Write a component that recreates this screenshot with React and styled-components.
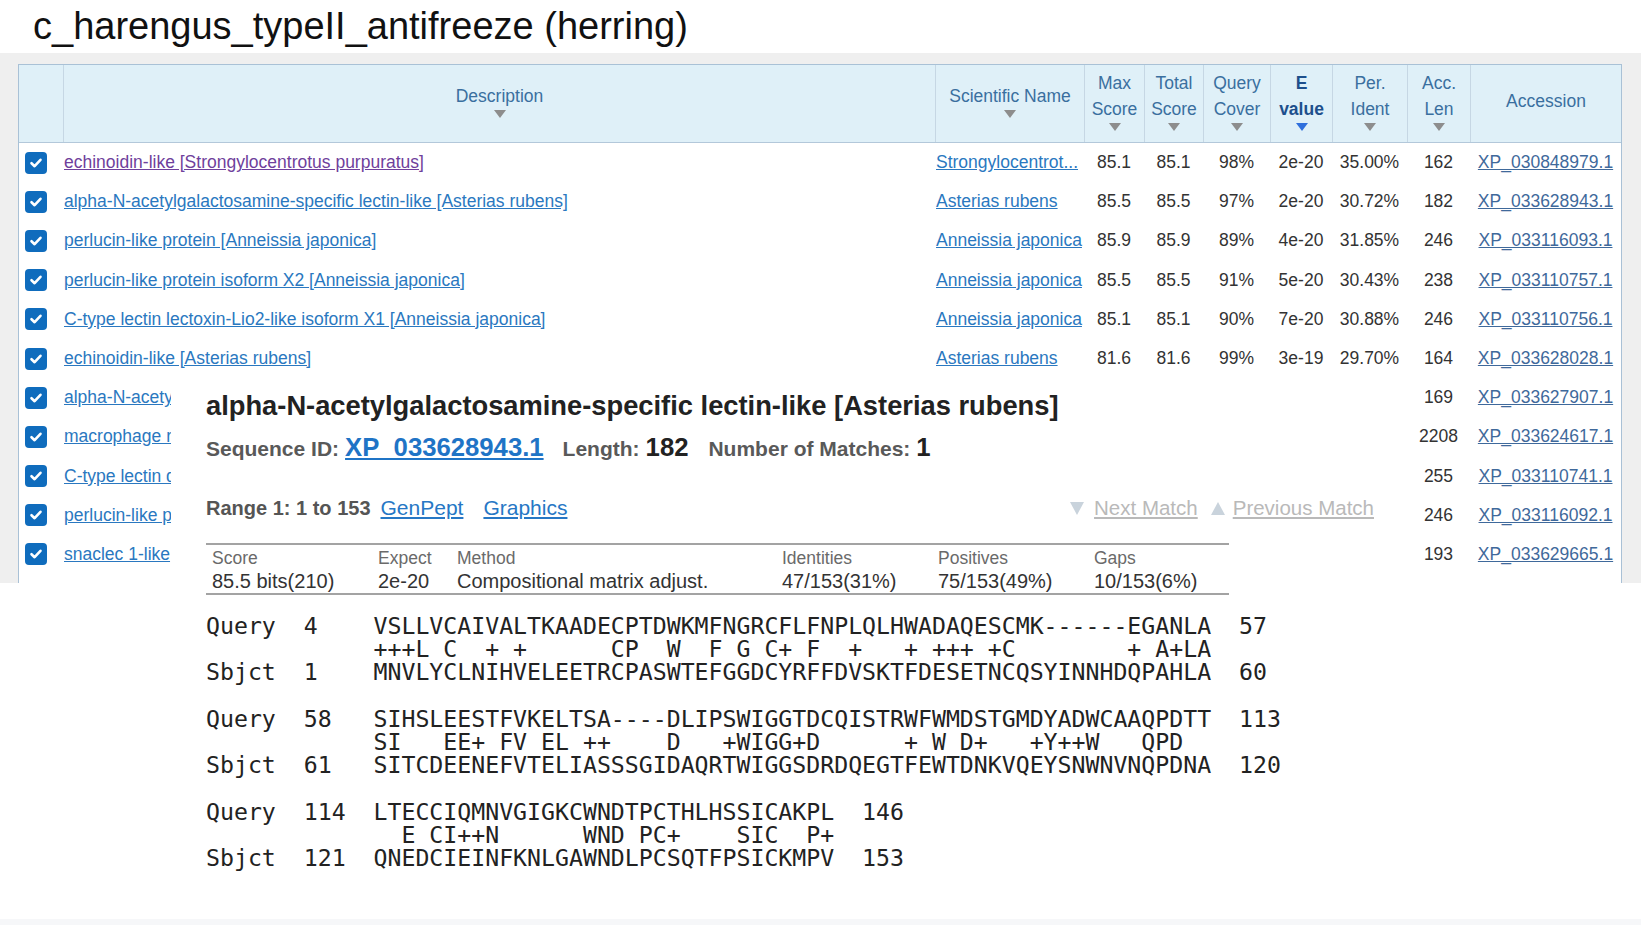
import styled, { createGlobalStyle } from "styled-components";

const GlobalStyle = createGlobalStyle`
  html, body {
    margin: 0;
    padding: 0;
    background: #fff;
  }
  body {
    width: 1641px;
    height: 925px;
    overflow: hidden;
    font-family: "Liberation Sans", Arial, sans-serif;
  }
`;

const COLS = "44px 872px 149px 60px 59px 67px 62px 75px 63px 151px";

const hits = [
  { desc: "echinoidin-like [Strongylocentrotus purpuratus]", visited: true, sci: "Strongylocentrot...", max: "85.1", total: "85.1", cover: "98%", e: "2e-20", ident: "35.00%", len: "162", acc: "XP_030848979.1" },
  { desc: "alpha-N-acetylgalactosamine-specific lectin-like [Asterias rubens]", sci: "Asterias rubens", max: "85.5", total: "85.5", cover: "97%", e: "2e-20", ident: "30.72%", len: "182", acc: "XP_033628943.1" },
  { desc: "perlucin-like protein [Anneissia japonica]", sci: "Anneissia japonica", max: "85.9", total: "85.9", cover: "89%", e: "4e-20", ident: "31.85%", len: "246", acc: "XP_033116093.1" },
  { desc: "perlucin-like protein isoform X2 [Anneissia japonica]", sci: "Anneissia japonica", max: "85.5", total: "85.5", cover: "91%", e: "5e-20", ident: "30.43%", len: "238", acc: "XP_033110757.1" },
  { desc: "C-type lectin lectoxin-Lio2-like isoform X1 [Anneissia japonica]", sci: "Anneissia japonica", max: "85.1", total: "85.1", cover: "90%", e: "7e-20", ident: "30.88%", len: "246", acc: "XP_033110756.1" },
  { desc: "echinoidin-like [Asterias rubens]", sci: "Asterias rubens", max: "81.6", total: "81.6", cover: "99%", e: "3e-19", ident: "29.70%", len: "164", acc: "XP_033628028.1" },
  { desc: "alpha-N-acetylgal", len: "169", acc: "XP_033627907.1" },
  { desc: "macrophage receptor", len: "2208", acc: "XP_033624617.1" },
  { desc: "C-type lectin domain", len: "255", acc: "XP_033110741.1" },
  { desc: "perlucin-like protein", len: "246", acc: "XP_033116092.1" },
  { desc: "snaclec 1-like", len: "193", acc: "XP_033629665.1" },
  { desc: "", len: "", acc: "" },
];

const alignment = `Query  4    VSLLVCAIVALTKAADECPTDWKMFNGRCFLFNPLQLHWADAQESCMK------EGANLA  57
            +++L C  + +      CP  W  F G C+ F  +   + +++ +C        + A+LA
Sbjct  1    MNVLYCLNIHVELEETRCPASWTEFGGDCYRFFDVSKTFDESETNCQSYINNHDQPAHLA  60

Query  58   SIHSLEESTFVKELTSA----DLIPSWIGGTDCQISTRWFWMDSTGMDYADWCAAQPDTT  113
            SI   EE+ FV EL ++    D   +WIGG+D      + W D+   +Y++W   QPD
Sbjct  61   SITCDEENEFVTELIASSSGIDAQRTWIGGSDRDQEGTFEWTDNKVQEYSNWNVNQPDNA  120

Query  114  LTECCIQMNVGIGKCWNDTPCTHLHSSICAKPL  146
              E CI++N      WND PC+    SIC  P+
Sbjct  121  QNEDCIEINFKNLGAWNDLPCSQTFPSICKMPV  153`;

export default function App() {
  return (
    <Page>
      <GlobalStyle />
      <Title>c_harengus_typeII_antifreeze (herring)</Title>

      <Shot>
        <Table>
          <Head>
            <HeadCell $first />
            <HeadCell>Description<SortArrow /></HeadCell>
            <HeadCell>Scientific Name<SortArrow /></HeadCell>
            <HeadCell><span>Max</span><span>Score</span><SortArrow /></HeadCell>
            <HeadCell><span>Total</span><span>Score</span><SortArrow /></HeadCell>
            <HeadCell><span>Query</span><span>Cover</span><SortArrow /></HeadCell>
            <HeadCell $active><span>E</span><span>value</span><SortArrow $active /></HeadCell>
            <HeadCell><span>Per.</span><span>Ident</span><SortArrow /></HeadCell>
            <HeadCell><span>Acc.</span><span>Len</span><SortArrow /></HeadCell>
            <HeadCell>Accession</HeadCell>
          </Head>

          {hits.map((h, i) => (
            <Row key={i}>
              <CheckCell>
                <Check>
                  <svg width="14" height="14" viewBox="0 0 14 14">
                    <path d="M2.5 7.2 L5.6 10.2 L11.5 3.8" fill="none" stroke="#fff" strokeWidth="2.6" strokeLinecap="round" strokeLinejoin="round" />
                  </svg>
                </Check>
              </CheckCell>
              <DescCell>
                {h.desc && <Link href="#" $visited={h.visited}>{h.desc}</Link>}
              </DescCell>
              <SciCell>{h.sci && <Link href="#">{h.sci}</Link>}</SciCell>
              <Num>{h.max}</Num>
              <Num>{h.total}</Num>
              <Num>{h.cover}</Num>
              <Num>{h.e}</Num>
              <Num>{h.ident}</Num>
              <Num>{h.len}</Num>
              <Num>{h.acc && <AccLink href="#">{h.acc}</AccLink>}</Num>
            </Row>
          ))}
        </Table>
      </Shot>

      <Blank />
      <BottomStrip />

      <Popup>
        <PopTitle>alpha-N-acetylgalactosamine-specific lectin-like [Asterias rubens]</PopTitle>
        <SeqLine>
          <Label>Sequence ID:</Label>
          <BigLink href="#">XP_033628943.1</BigLink>
          <Label $gap={19}>Length:</Label>
          <BigValue>182</BigValue>
          <Label $gap={20}>Number of Matches:</Label>
          <BigValue>1</BigValue>
        </SeqLine>

        <RangeLine>
          <RangeLabel>Range 1: 1 to 153</RangeLabel>
          <PlainLink href="#" $gap={10}>GenPept</PlainLink>
          <PlainLink href="#" $gap={20}>Graphics</PlainLink>
          <Nav>
            <NavArrow />
            <NavLink href="#">Next Match</NavLink>
            <NavArrow $up />
            <NavLink href="#">Previous Match</NavLink>
          </Nav>
        </RangeLine>

        <ScoreTable>
          <ScoreHead>Score</ScoreHead>
          <ScoreHead>Expect</ScoreHead>
          <ScoreHead>Method</ScoreHead>
          <ScoreHead>Identities</ScoreHead>
          <ScoreHead>Positives</ScoreHead>
          <ScoreHead>Gaps</ScoreHead>
          <ScoreValue>85.5 bits(210)</ScoreValue>
          <ScoreValue>2e-20</ScoreValue>
          <ScoreValue>Compositional matrix adjust.</ScoreValue>
          <ScoreValue>47/153(31%)</ScoreValue>
          <ScoreValue>75/153(49%)</ScoreValue>
          <ScoreValue>10/153(6%)</ScoreValue>
        </ScoreTable>

        <Alignment>{alignment}</Alignment>
      </Popup>
    </Page>
  );
}

const Page = styled.div`
  position: relative;
  width: 1641px;
  height: 925px;
  display: flex;
  flex-direction: column;
  background: #fff;
`;

const Title = styled.h1`
  margin: 0;
  height: 53px;
  padding-left: 33px;
  font-size: 38px;
  font-weight: 400;
  line-height: 52px;
  color: #111;
  white-space: nowrap;
`;

const Shot = styled.div`
  height: 530px;
  flex-shrink: 0;
  padding-top: 11px;
  box-sizing: border-box;
  background: #efefef;
  overflow: hidden;
`;

const Table = styled.div`
  width: 1604px;
  margin-left: 18px;
  box-sizing: border-box;
  border: 1px solid #a9c1d6;
  border-bottom: none;
  background: #fff;
`;

const Head = styled.div`
  display: grid;
  grid-template-columns: ${COLS};
  height: 77px;
  border-bottom: 1px solid #b3c8da;
  background: #dff0f8;
`;

const HeadCell = styled.div`
  display: flex;
  flex-direction: column;
  align-items: center;
  justify-content: center;
  padding-bottom: 6px;
  box-sizing: border-box;
  border-left: ${(p) => (p.$first ? "none" : "1px solid #c6d7e4")};
  font-size: 17.5px;
  line-height: 26px;
  text-align: center;
  white-space: nowrap;
  color: ${(p) => (p.$active ? "#1d4f8c" : "#3a6f9f")};
  font-weight: ${(p) => (p.$active ? 700 : 400)};
`;

const SortArrow = styled.span`
  display: block;
  width: 0;
  height: 0;
  margin-top: 1px;
  border-left: 6px solid transparent;
  border-right: 6px solid transparent;
  border-top: 8px solid ${(p) => (p.$active ? "#2f6fdc" : "#8d8d8d")};
`;

const Row = styled.div`
  display: grid;
  grid-template-columns: ${COLS};
  height: 39.2px;
  align-items: center;
  font-size: 17.5px;
  color: #333;
`;

const CheckCell = styled.div`
  display: flex;
  align-items: center;
  padding-left: 6px;
`;

const Check = styled.span`
  display: flex;
  align-items: center;
  justify-content: center;
  width: 22px;
  height: 22px;
  border-radius: 4px;
  background: #0f6cbd;
`;

const DescCell = styled.div`
  padding-left: 1px;
  white-space: nowrap;
  overflow: hidden;
`;

const SciCell = styled.div`
  padding-left: 1px;
  white-space: nowrap;
  overflow: hidden;
`;

const Num = styled.div`
  text-align: center;
  white-space: nowrap;
`;

const Link = styled.a`
  color: ${(p) => (p.$visited ? "#6f3f9c" : "#2a78c0")};
  text-decoration: underline;
`;

const AccLink = styled.a`
  color: #3f699b;
  text-decoration: underline;
`;

const Blank = styled.div`
  flex: 1;
`;

const BottomStrip = styled.div`
  height: 6px;
  background: #f6f7f9;
`;

const Popup = styled.div`
  position: absolute;
  left: 171px;
  top: 375px;
  width: 1243px;
  height: 510px;
  box-sizing: border-box;
  padding: 14px 0 0 35px;
  background: #fff;
`;

const PopTitle = styled.div`
  font-size: 27.3px;
  font-weight: 700;
  line-height: 34px;
  color: #222;
  white-space: nowrap;
`;

const SeqLine = styled.div`
  display: flex;
  align-items: baseline;
  margin-top: 8px;
  line-height: 32px;
  white-space: nowrap;
`;

const Label = styled.span`
  margin-left: ${(p) => p.$gap || 0}px;
  margin-right: 6px;
  font-size: 21px;
  font-weight: 700;
  color: #595959;
`;

const BigLink = styled.a`
  font-size: 25.7px;
  font-weight: 700;
  color: #1f74c6;
  text-decoration: underline;
`;

const BigValue = styled.span`
  font-size: 25.7px;
  font-weight: 700;
  color: #222;
`;

const RangeLine = styled.div`
  display: flex;
  align-items: baseline;
  width: 1168px;
  margin-top: 28px;
  line-height: 30px;
  white-space: nowrap;
`;

const RangeLabel = styled.span`
  font-size: 20px;
  font-weight: 700;
  color: #555;
`;

const PlainLink = styled.a`
  margin-left: ${(p) => p.$gap}px;
  font-size: 21px;
  color: #2677c5;
  text-decoration: underline;
`;

const Nav = styled.span`
  display: flex;
  align-items: center;
  margin-left: auto;
  align-self: center;
`;

const NavArrow = styled.span`
  width: 0;
  height: 0;
  margin: 0 ${(p) => (p.$up ? 8 : 10)}px 0 ${(p) => (p.$up ? 13 : 0)}px;
  border-left: 7px solid transparent;
  border-right: 7px solid transparent;
  ${(p) =>
    p.$up
      ? "border-bottom: 13px solid #c9d3dc;"
      : "border-top: 13px solid #c9d3dc;"}
`;

const NavLink = styled.a`
  font-size: 20.5px;
  color: #b9b9b9;
  text-decoration: underline;
`;

const ScoreTable = styled.div`
  display: grid;
  grid-template-columns: 166px 79px 325px 156px 156px 1fr;
  width: 1023px;
  margin-top: 20px;
  padding-top: 2px;
  border-top: 2px solid #a3a3a3;
  border-bottom: 2px solid #a3a3a3;
  white-space: nowrap;
`;

const ScoreHead = styled.div`
  padding-left: 6px;
  font-size: 17.5px;
  line-height: 22px;
  color: #6a6a6a;
`;

const ScoreValue = styled.div`
  padding-left: 6px;
  font-size: 20px;
  line-height: 24px;
  color: #333;
`;

const Alignment = styled.pre`
  margin: 19px 0 0;
  font-family: "DejaVu Sans Mono", monospace;
  font-size: 23.2px;
  line-height: 23.2px;
  color: #222;
`;
